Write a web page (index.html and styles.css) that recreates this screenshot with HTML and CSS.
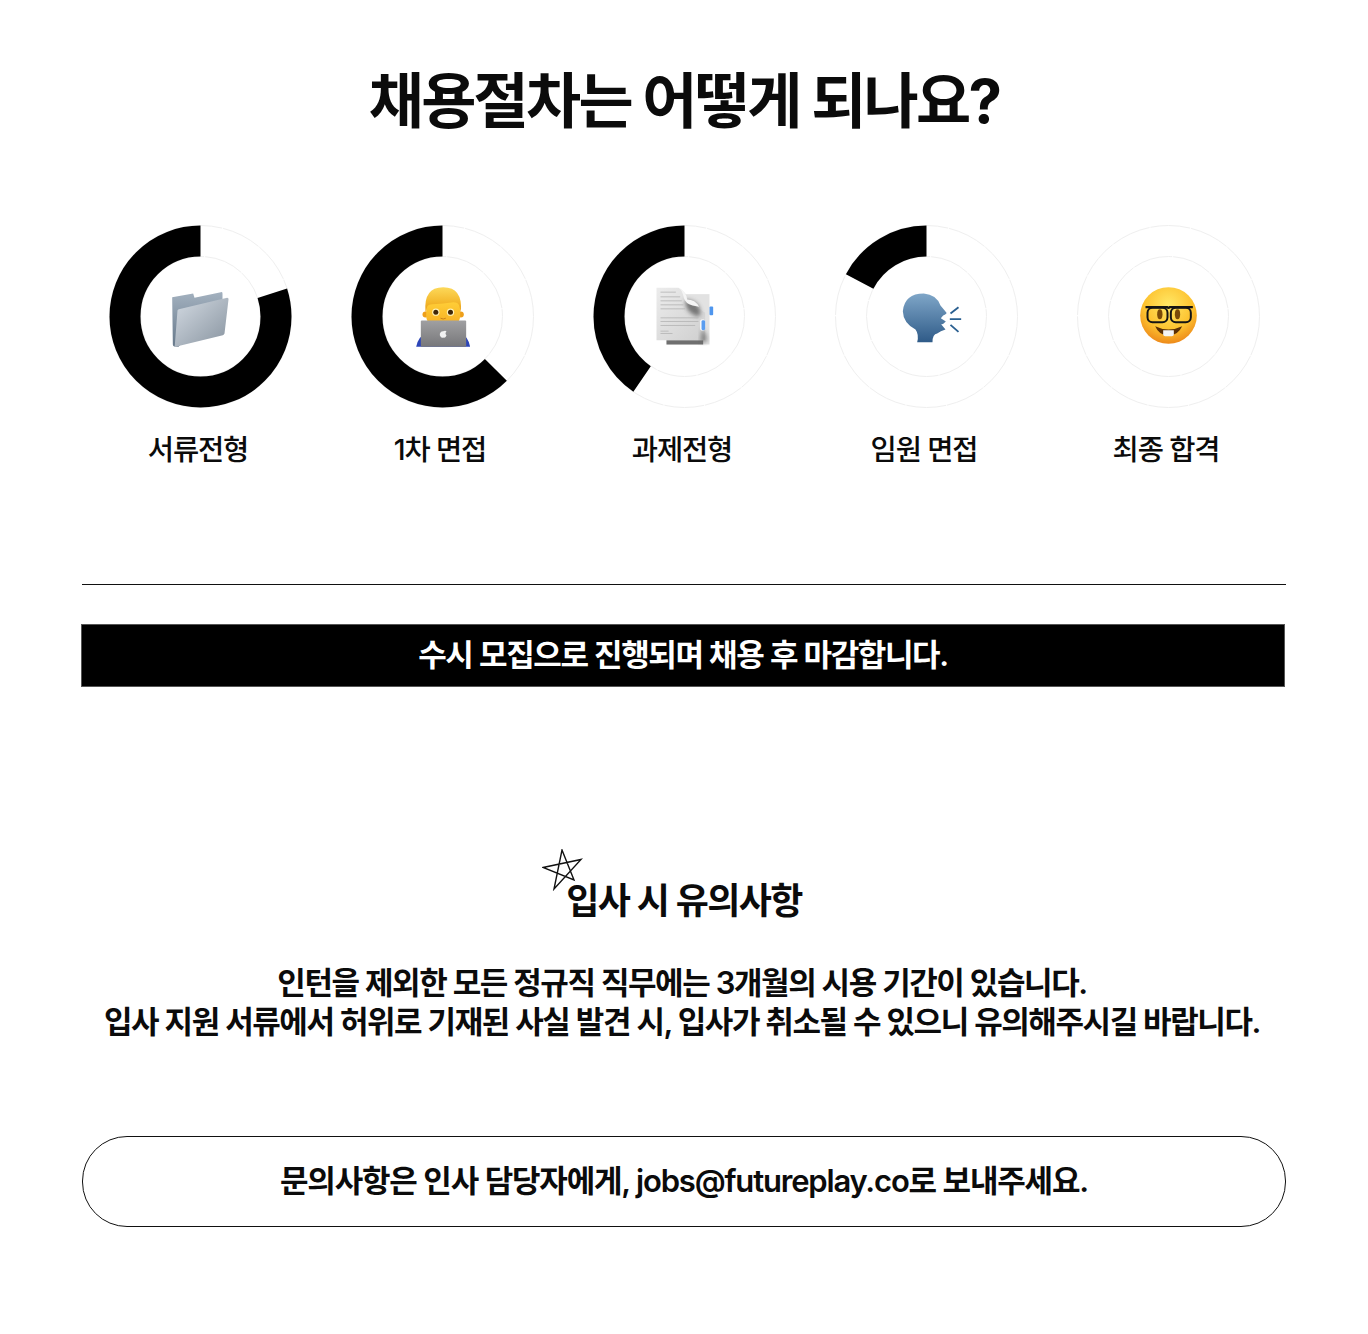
FILE: index.html
```html
<!DOCTYPE html>
<html lang="ko">
<head>
<meta charset="utf-8">
<title>채용절차</title>
<link rel="stylesheet" href="styles.css">
</head>
<body>
<main class="page">
  <h1 class="title">채용절차는 어떻게 되나요?</h1>
  <svg width="0" height="0" class="defs">
    <defs>
      <linearGradient id="folderFront" x1="0" y1="0" x2="1" y2="1"><stop offset="0" stop-color="#d4dbe3"/><stop offset="1" stop-color="#87939f"/></linearGradient>
      <linearGradient id="folderBack" x1="0" y1="0" x2="0" y2="1"><stop offset="0" stop-color="#a3b1bf"/><stop offset="1" stop-color="#66788a"/></linearGradient>
      <linearGradient id="hair" x1="0" y1="0" x2="0" y2="1"><stop offset="0" stop-color="#fcd95a"/><stop offset=".6" stop-color="#f4b82c"/><stop offset="1" stop-color="#e59a17"/></linearGradient>
      <linearGradient id="skin" x1="0" y1="0" x2="0" y2="1"><stop offset="0" stop-color="#ffcf38"/><stop offset="1" stop-color="#f6ab1f"/></linearGradient>
      <linearGradient id="laptop" x1="0" y1="0" x2="0" y2="1"><stop offset="0" stop-color="#a0a0a2"/><stop offset="1" stop-color="#77777a"/></linearGradient>
      <linearGradient id="head" x1="0" y1="0" x2="0" y2="1"><stop offset="0" stop-color="#7fa6c8"/><stop offset="1" stop-color="#2f5b88"/></linearGradient>
      <radialGradient id="face" cx=".5" cy=".32" r=".7"><stop offset="0" stop-color="#ffe866"/><stop offset=".62" stop-color="#fdc22f"/><stop offset="1" stop-color="#ec8518"/></radialGradient>
      <linearGradient id="shade" x1="0" y1="0" x2="1" y2="1"><stop offset="0" stop-color="#ececec"/><stop offset="1" stop-color="#cfcfcf"/></linearGradient>
      <filter id="soft" x="-30%" y="-30%" width="160%" height="160%"><feGaussianBlur stdDeviation="6"/></filter>
    </defs>
  </svg>
  <section class="steps">
    <div class="step">
      <svg class="ring" viewBox="-91.5 -91.5 183 183" width="183" height="183">
        <circle class="track" r="91"/><circle class="track" r="60"/>
        <circle class="arc" r="75.500" pathLength="100" stroke-dasharray="80 100" transform="rotate(-90) scale(1 -1)"/>
        <g transform="scale(.3333) translate(-301 -301)">
          <path d="M216 243 L279 232 L283 245 L362 228 Q367 227 367 232 L367 250 L235 392 L222 391 Q218 390 218 385 Z" fill="url(#folderBack)"/>
          <path d="M236 279 L381 245 Q386 245 385 250 L373 352 Q372 356 368 357 L226 392 Q222 392 224 386 L232 283 Q233 280 236 279 Z" fill="url(#folderFront)"/>
        </g>
      </svg>
      <p class="step-label">서류전형</p>
    </div>
    <div class="step">
      <svg class="ring" viewBox="-91.5 -91.5 183 183" width="183" height="183">
        <circle class="track" r="91"/><circle class="track" r="60"/>
        <circle class="arc" r="75.500" pathLength="100" stroke-dasharray="62.500 100" transform="rotate(-90) scale(1 -1)"/>
        <g transform="scale(.3333) translate(-292 -301)">
          <path d="M213 392 Q220 358 245 352 L345 352 Q368 358 375 392 Z" fill="#2c45b8"/>
          <circle cx="241" cy="295" r="9" fill="#ee9f1a"/><circle cx="347" cy="295" r="9" fill="#ee9f1a"/>
          <path d="M243 255 L345 255 L345 300 Q342 335 294 338 Q246 335 243 300 Z" fill="url(#skin)"/>
          <path d="M241 288 Q234 213 294 213 Q354 213 347 288 L342 268 Q338 258 325 258 Q295 262 262 264 Q248 264 246 272 Z" fill="url(#hair)"/>
          <circle cx="272" cy="288" r="11" fill="#fff3b8"/><circle cx="272" cy="288" r="7.500" fill="#3f2608"/>
          <circle cx="316" cy="288" r="11" fill="#fff3b8"/><circle cx="316" cy="288" r="7.500" fill="#3f2608"/>
          <path d="M286 306 Q294 311 302 306" fill="none" stroke="#c9821a" stroke-width="3"/>
          <rect x="227" y="313" width="136" height="79" rx="3" fill="url(#laptop)"/>
          <path d="M294 345 Q302 341 304 347 Q298 351 304 358 Q300 367 294 364 Q288 367 284 357 Q283 346 294 345 Z" fill="#f2f2f2"/>
        </g>
      </svg>
      <p class="step-label">1차 면접</p>
    </div>
    <div class="step">
      <svg class="ring" viewBox="-91.5 -91.5 183 183" width="183" height="183">
        <circle class="track" r="91"/><circle class="track" r="60"/>
        <circle class="arc" r="75.500" pathLength="100" stroke-dasharray="40.500 100" transform="rotate(-90) scale(1 -1)"/>
        <g transform="scale(.3333) translate(-298 -301)">
          <rect x="244" y="234" width="129" height="151" fill="#e2e2e2"/>
          <rect x="244" y="372" width="110" height="13" fill="#6f6f6f"/>
          <path d="M214 215 L280 215 Q300 225 320 262 L360 290 L360 372 L214 372 Z" fill="url(#shade)"/>
          <path d="M300 250 Q335 250 345 280 Q350 310 325 296 Q300 285 300 250 Z" fill="#555" filter="url(#soft)" opacity=".75"/>
          <path d="M350 340 Q368 350 365 378 L345 378 Z" fill="#666" filter="url(#soft)" opacity=".7"/>
          <path d="M282 215 Q302 225 306 250 Q330 250 342 272 L322 268 Q300 262 296 245 Q292 225 282 215 Z" fill="#f5f5f5"/>
          <path d="M226 228 H272 M226 242 H285 M226 254 H290 M226 266 H295 M226 278 H300 M226 305 H340 M226 316 H340 M226 328 H330 M226 345 H250 M226 352 H262" stroke="#b4b4b4" stroke-width="2.500" fill="none"/>
          <rect x="345" y="310" width="15" height="33" rx="5" fill="#fff"/>
          <rect x="349" y="312" width="11" height="30" rx="4" fill="#5a9df0"/>
          <rect x="373" y="271" width="11" height="26" rx="3" fill="#4f96ee"/>
        </g>
      </svg>
      <p class="step-label">과제전형</p>
    </div>
    <div class="step">
      <svg class="ring" viewBox="-91.5 -91.5 183 183" width="183" height="183">
        <circle class="track" r="91"/><circle class="track" r="60"/>
        <circle class="arc" r="75.500" pathLength="100" stroke-dasharray="17.300 100" transform="rotate(-90) scale(1 -1)"/>
        <g transform="scale(.3333) translate(-288 -301)">
          <path d="M260 378 Q266 355 255 340 Q218 320 217 285 Q222 232 280 232 Q318 235 330 268 L348 290 Q349 294 338 298 L331 306 L346 316 Q338 325 332 324 L345 340 Q330 345 320 352 Q306 354 306 378 Z" fill="url(#head)"/>
          <path d="M360 292 L384 273 M358 309 L392 309 M360 326 L384 347" stroke="#2a5f90" stroke-width="5.500" fill="none"/>
        </g>
      </svg>
      <p class="step-label">임원 면접</p>
    </div>
    <div class="step">
      <svg class="ring" viewBox="-91.5 -91.5 183 183" width="183" height="183">
        <circle class="track" r="91"/><circle class="track" r="60"/>
        <g transform="scale(.3333) translate(-294 -301)">
          <circle cx="294" cy="298" r="85" fill="url(#face)"/>
          <ellipse cx="268" cy="294" rx="8" ry="15" fill="#7a4a08"/><ellipse cx="321" cy="294" rx="8" ry="15" fill="#7a4a08"/>
          <path d="M225 273 L290 273 Q294 277 298 273 L367 273" fill="none" stroke="#141414" stroke-width="7"/>
          <rect x="231" y="275" width="60" height="43" rx="15" fill="none" stroke="#141414" stroke-width="6"/>
          <rect x="301" y="275" width="60" height="43" rx="15" fill="none" stroke="#141414" stroke-width="6"/>
          <path d="M254 330 Q294 350 335 330 Q322 358 294 358 Q266 358 254 330 Z" fill="#5a2f05"/>
          <path d="M278 342 H310 V354 Q310 360 304 360 H284 Q278 360 278 354 Z" fill="#f4f4f4"/>
        </g>
      </svg>
      <p class="step-label">최종 합격</p>
    </div>
  </section>
  <hr class="rule">
  <p class="banner">수시 모집으로 진행되며 채용 후 마감합니다.</p>
  <section class="notice">
    <h2 class="notice-title">
      <svg class="star" viewBox="0 0 42 42" width="42" height="42"><path d="M1 18.500 L39 10.500 L12 40 L20 1 L32 31 Z" fill="none" stroke="#111" stroke-width="1.400"/></svg>
      입사 시 유의사항
    </h2>
    <p class="notice-body">인턴을 제외한 모든 정규직 직무에는 3개월의 시용 기간이 있습니다.<br>입사 지원 서류에서 허위로 기재된 사실 발견 시, 입사가 취소될 수 있으니 유의해주시길 바랍니다.</p>
  </section>
  <p class="contact">문의사항은 인사 담당자에게, jobs@futureplay.co로 보내주세요.</p>
</main>
</body>
</html>
```
FILE: styles.css
```css
* { box-sizing: border-box; }
html, body { margin: 0; background: #fff; }
body {
  color: #0b0b0b;
  font-family: Inter, "Noto Sans CJK KR", "Liberation Sans", sans-serif;
}
.page {
  width: 1368px;
  height: 1334px;
  padding: 61px 82px 0;
  overflow: hidden;
}
.defs { position: absolute; }
.title {
  margin: 0;
  height: 80px;
  text-align: center;
  font-size: 60px;
  line-height: 80px;
  font-weight: 700;
  letter-spacing: -0.046em;
}
.steps {
  display: flex;
  gap: 10px;
  margin-top: 84px;
}
.step {
  flex: 0 0 232px;
  display: flex;
  flex-direction: column;
  align-items: center;
}
.ring {
  display: block;
  margin-left: 5px;
  margin-top: -0.5px;
  overflow: visible;
}
.track { fill: none; stroke: #efefef; stroke-width: 1; stroke-dasharray: 40 1; }
.arc { fill: none; stroke: #000; stroke-width: 31; }
.step-label {
  margin: 24.5px 0 0;
  font-size: 28.5px;
  line-height: 36px;
  font-weight: 500;
  letter-spacing: -0.04em;
  text-align: center;
}
.rule {
  margin: 116px 0 0;
  border: 0;
  height: 1px;
  background: #111;
}
.banner {
  margin: 39px 1px 0 -1px;
  height: 63px;
  border: 1px solid #555;
  background: #000;
  color: #fff;
  text-align: center;
  font-size: 31px;
  line-height: 60px;
  font-weight: 600;
  letter-spacing: -0.044em;
}
.notice { margin-top: 190px; text-align: center; }
.notice-title {
  position: relative;
  width: max-content;
  margin: 0 auto;
  font-size: 36px;
  line-height: 48px;
  font-weight: 600;
  letter-spacing: -0.045em;
}
.star { position: absolute; left: -24px; top: -28px; }
.notice-body {
  margin: 38px 4px 0 0;
  font-size: 31px;
  line-height: 39px;
  font-weight: 600;
  letter-spacing: -0.046em;
}
.contact {
  margin: 95px 0 0;
  height: 91px;
  border: 1px solid #111;
  border-radius: 45px;
  text-align: center;
  font-size: 31px;
  line-height: 87px;
  font-weight: 600;
  letter-spacing: -0.038em;
}
```
